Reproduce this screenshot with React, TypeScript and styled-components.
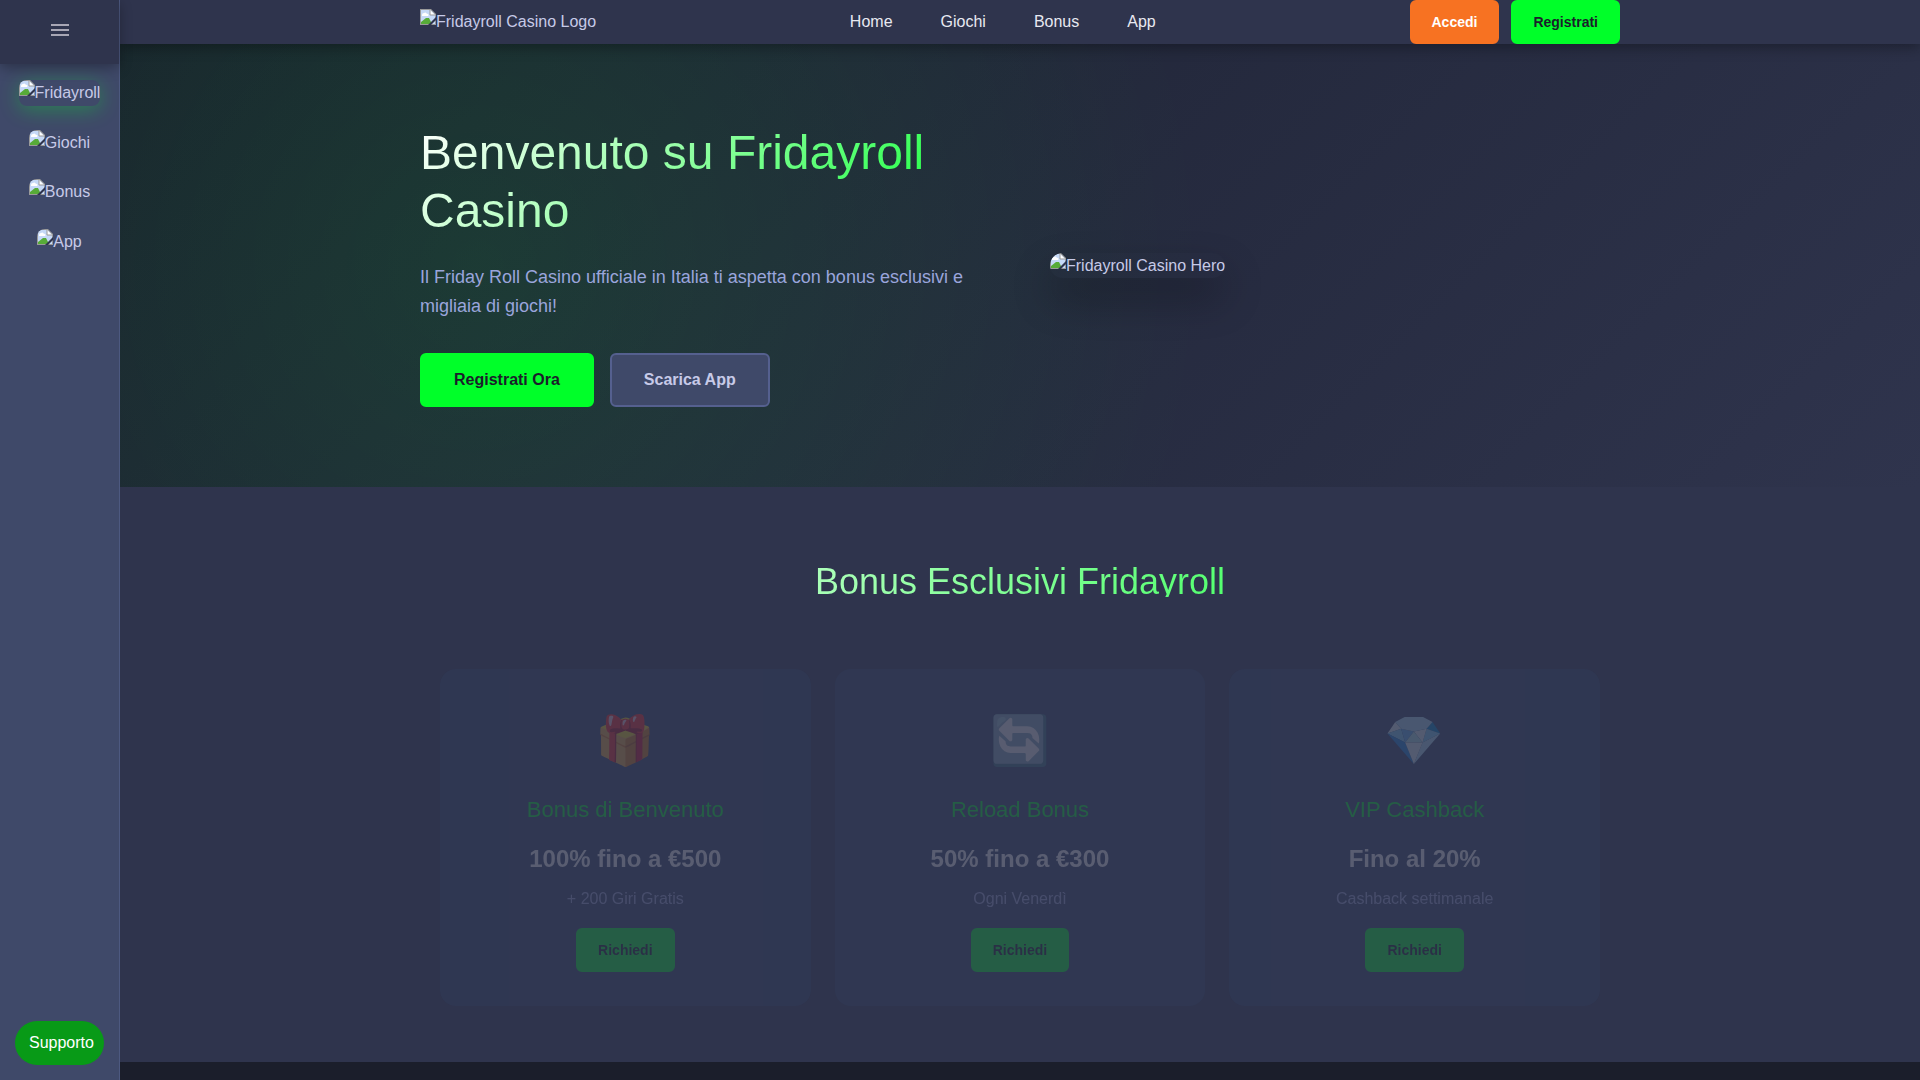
import React from "react";
import styled, { createGlobalStyle, css } from "styled-components";

const GlobalStyle = createGlobalStyle`
  *, *::before, *::after { box-sizing: border-box; }
  body {
    margin: 0;
    background: #1b1e2b;
    color: #c7cae8;
    font-family: "Liberation Sans", Arial, sans-serif;
    font-size: 16px;
    line-height: 1.6;
  }
  h1, h2, h3, p { margin: 0; font-weight: 400; }
  a { color: inherit; text-decoration: none; }
  button { font-family: inherit; cursor: pointer; }
`;

const Layout = styled.div`
  display: grid;
  grid-template-columns: 120px minmax(0, 1fr);
  min-height: 100vh;
`;

const Sidebar = styled.aside`
  position: sticky;
  top: 0;
  z-index: 3;
  height: 100vh;
  display: flex;
  flex-direction: column;
  background: #3f4969;
  border-right: 1px solid #4d5980;
`;

const SidebarTop = styled.div`
  display: flex;
  align-items: center;
  justify-content: center;
  height: 64px;
  padding-bottom: 4px;
  background: #2f344d;
  box-shadow: 0 4px 12px rgba(0, 0, 0, 0.3);
`;

const MenuButton = styled.button`
  display: flex;
  padding: 0;
  border: 0;
  background: none;
  color: #a8a6b4;
`;

const SideNav = styled.nav`
  flex: 1;
  display: flex;
  flex-direction: column;
  align-items: center;
  gap: 24px;
  padding: 16px 8px;
`;

const SideLink = styled.a<{ $active?: boolean }>`
  display: flex;
  border-radius: 8px;
  overflow: hidden;
  ${(p) =>
    p.$active &&
    css`
      box-shadow: 0 4px 20px rgba(0, 255, 41, 0.3);
    `}
`;

const SupportButton = styled.button`
  margin: 0 15px 15px;
  height: 44px;
  padding: 0 10px 0 14px;
  border: 0;
  border-radius: 22px;
  background: #089a17;
  color: #fff;
  font-size: 16px;
  text-align: left;
`;

const Main = styled.div`
  display: flex;
  flex-direction: column;
`;

const Header = styled.header`
  position: sticky;
  top: 0;
  z-index: 2;
  background: #2f344d;
  box-shadow: 0 4px 12px rgba(0, 0, 0, 0.3);
`;

const Container = styled.div`
  width: 100%;
  max-width: 1200px;
  margin: 0 auto;
`;

const HeaderRow = styled(Container)`
  display: flex;
  align-items: center;
  justify-content: space-between;
`;

const LogoLink = styled.a`
  display: flex;
`;

const Nav = styled.nav`
  display: flex;
  gap: 48px;
  color: #e8e9f1;
`;

const Actions = styled.div<{ $gap: number }>`
  display: flex;
  gap: ${(p) => p.$gap}px;
`;

const tones = {
  green: css`
    background: #00ff29;
    border-color: #00ff29;
    color: #1b1e2b;
  `,
  orange: css`
    background: #f77222;
    border-color: #f77222;
    color: #fff;
  `,
  slate: css`
    background: #3f4969;
    border-color: #55608f;
    color: #c7cae8;
  `,
};

const Button = styled.button<{ $tone: keyof typeof tones; $large?: boolean }>`
  height: ${(p) => (p.$large ? 54 : 44)}px;
  padding: 0 ${(p) => (p.$large ? 32 : 20)}px;
  border: 2px solid;
  border-radius: 6px;
  font-size: ${(p) => (p.$large ? 16 : 14)}px;
  font-weight: 600;
  ${(p) => tones[p.$tone]}
`;

const Hero = styled.section`
  padding: 80px 0;
  background:
    radial-gradient(circle at 20% 50%, rgba(0, 255, 41, 0.1) 0%, transparent 50%),
    linear-gradient(135deg, #1a1f2e 0%, #2f344d 100%);
`;

const HeroGrid = styled(Container)`
  display: grid;
  grid-template-columns: 1fr 1fr;
  align-items: center;
  gap: 60px;
`;

const gradientText = css`
  background: linear-gradient(135deg, #fff 0%, #00ff29 100%);
  -webkit-background-clip: text;
  background-clip: text;
  color: transparent;
`;

const HeroTitle = styled.h1`
  margin-bottom: 24px;
  font-size: 48px;
  line-height: 1.2;
  ${gradientText}
`;

const HeroText = styled.p`
  margin-bottom: 32px;
  color: #9aa5dc;
  font-size: 18px;
`;

const HeroFigure = styled.div`
  justify-self: start;
  display: flex;
  border-radius: 16px;
  overflow: hidden;
  box-shadow: 0 20px 40px rgba(0, 0, 0, 0.3);
`;

const BonusSection = styled.section`
  padding: 80px 0 56px;
  background: #2f344d;
`;

const SectionTitle = styled.h2`
  margin-bottom: 72px;
  font-size: 36px;
  line-height: 30px;
  text-align: center;
  ${gradientText}
`;

const Cards = styled(Container)`
  display: grid;
  grid-template-columns: repeat(3, 1fr);
  gap: 24px;
  padding: 0 20px;
`;

const Card = styled.article`
  display: flex;
  flex-direction: column;
  align-items: center;
  padding: 34px;
  border-radius: 16px;
  background: #344669;
  opacity: 0.2;
  text-align: center;
`;

const CardIcon = styled.div`
  margin-bottom: 16px;
  font-family: "Liberation Sans", "Noto Color Emoji", sans-serif;
  font-size: 48px;
  color: #fff;
`;

const CardTitle = styled.h3`
  margin-bottom: 16px;
  color: #00ff29;
  font-size: 22px;
  line-height: 28px;
`;

const CardAmount = styled.p`
  margin-bottom: 8px;
  color: #fff;
  font-size: 24px;
  font-weight: 700;
`;

const CardNote = styled.p`
  margin-bottom: 16px;
  color: #a5aee0;
`;

const NextSection = styled.section`
  flex: 1;
  background: #1b1e2b;
`;

const PictureLabel = styled.span`
  display: inline-flex;
  align-items: flex-start;
  white-space: nowrap;
`;

function Picture({ label }: { label: string }) {
  return (
    <PictureLabel>
      <svg width="16" height="16" viewBox="0 0 16 16" aria-hidden="true">
        <path d="M0 0H11L16 5V16H0Z" fill="#9a9a9a" />
        <path d="M1 1H10.500L15 5.500V15H1Z" fill="#c6d9f7" />
        <path d="M2 6a2 2 0 0 1 2-2a2 2 0 0 1 3 1a1 1 0 0 1 1 2H2Z" fill="#fff" />
        <path d="M1 15V13L6 9H9L12 15Z" fill="#57ab38" />
        <path d="M10 1V6H15Z" fill="#fff" />
        <path d="M10 0V6H16" fill="none" stroke="#9a9a9a" />
        <path d="M8 16L16 8V11L11 16Z" fill="#2f344d" />
      </svg>
      {label}
    </PictureLabel>
  );
}

const links = ["Home", "Giochi", "Bonus", "App"];
const sideLinks = ["Fridayroll", "Giochi", "Bonus", "App"];
const bonuses = [
  { icon: "🎁", title: "Bonus di Benvenuto", amount: "100% fino a €500", note: "+ 200 Giri Gratis" },
  { icon: "🔄", title: "Reload Bonus", amount: "50% fino a €300", note: "Ogni Venerdì" },
  { icon: "💎", title: "VIP Cashback", amount: "Fino al 20%", note: "Cashback settimanale" },
];

export default function App() {
  return (
    <>
      <GlobalStyle />
      <Layout>
        <Sidebar>
          <SidebarTop>
            <MenuButton type="button" aria-label="Menu">
              <svg width="18" height="12" viewBox="0 0 18 12" fill="currentColor">
                <path d="M0 0H18V2H0ZM0 5H18V7H0ZM0 10H18V12H0Z" />
              </svg>
            </MenuButton>
          </SidebarTop>
          <SideNav>
            {sideLinks.map((label, i) => (
              <SideLink key={label} href="#" $active={i === 0}>
                <Picture label={label} />
              </SideLink>
            ))}
          </SideNav>
          <SupportButton type="button">Supporto</SupportButton>
        </Sidebar>
        <Main>
          <Header>
            <HeaderRow>
              <LogoLink href="#">
                <Picture label="Fridayroll Casino Logo" />
              </LogoLink>
              <Nav>
                {links.map((label) => (
                  <a key={label} href="#">
                    {label}
                  </a>
                ))}
              </Nav>
              <Actions $gap={12}>
                <Button type="button" $tone="orange">Accedi</Button>
                <Button type="button" $tone="green">Registrati</Button>
              </Actions>
            </HeaderRow>
          </Header>
          <Hero>
            <HeroGrid>
              <div>
                <HeroTitle>Benvenuto su Fridayroll Casino</HeroTitle>
                <HeroText>
                  Il Friday Roll Casino ufficiale in Italia ti aspetta con bonus esclusivi e migliaia di giochi!
                </HeroText>
                <Actions $gap={16}>
                  <Button type="button" $tone="green" $large>Registrati Ora</Button>
                  <Button type="button" $tone="slate" $large>Scarica App</Button>
                </Actions>
              </div>
              <HeroFigure>
                <Picture label="Fridayroll Casino Hero" />
              </HeroFigure>
            </HeroGrid>
          </Hero>
          <BonusSection>
            <Container>
              <SectionTitle>Bonus Esclusivi Fridayroll</SectionTitle>
            </Container>
            <Cards>
              {bonuses.map((b) => (
                <Card key={b.title}>
                  <CardIcon>{b.icon}</CardIcon>
                  <CardTitle>{b.title}</CardTitle>
                  <CardAmount>{b.amount}</CardAmount>
                  <CardNote>{b.note}</CardNote>
                  <Button type="button" $tone="green">Richiedi</Button>
                </Card>
              ))}
            </Cards>
          </BonusSection>
          <NextSection />
        </Main>
      </Layout>
    </>
  );
}
